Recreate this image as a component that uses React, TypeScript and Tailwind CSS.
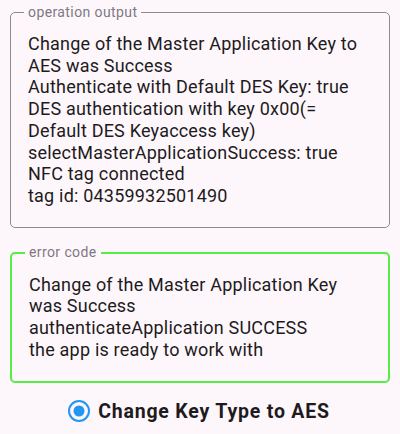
import React from 'react';

const outputLines = [
  'Change of the Master Application Key to',
  'AES was Success',
  'Authenticate with Default DES Key: true',
  'DES authentication with key 0x00(=',
  'Default DES Keyaccess key)',
  'selectMasterApplicationSuccess: true',
  'NFC tag connected',
  'tag id: 04359932501490',
];

const errorLines = [
  'Change of the Master Application Key',
  'was Success',
  'authenticateApplication SUCCESS',
  'the app is ready to work with',
];

interface OutlinedBoxProps {
  label: string;
  lines: string[];
  borderClass: string;
  className?: string;
}

const OutlinedBox: React.FC<OutlinedBoxProps> = ({ label, lines, borderClass, className = '' }) => (
  <fieldset className={`mx-[10px] rounded-[5px] border ${borderClass} pl-[17px] pr-3 pt-[13.5px] ${className}`}>
    <legend className="-ml-[4px] px-1 text-[14px] leading-[15px] tracking-[0.4px] text-[#7d7982]">{label}</legend>
    <div className="text-[18px] leading-[21.7px] tracking-[0.2px] text-[#1d1b20]">
      {lines.map((line, i) => (
        <div key={i} className="whitespace-nowrap">{line}</div>
      ))}
    </div>
  </fieldset>
);

export default function App() {
  return (
    <div
      className="w-[400px] h-[434px] overflow-hidden bg-[#fdf7fc] pt-[4.5px]"
      style={{ fontFamily: 'Roboto, "Noto Sans", sans-serif' }}
    >
      <OutlinedBox label="operation output" lines={outputLines} borderClass="border-[#8f8b93]" className="pb-[20px]" />
      <OutlinedBox
        label="error code"
        lines={errorLines}
        borderClass="border-[#55ee44] border-2"
        className="mt-[17.5px] pb-[21px]"
      />
      <div className="mt-[16px] flex h-6 items-center justify-center gap-[8px] pr-[2px]">
        <svg width="22" height="22" viewBox="0 0 22 22">
          <circle cx="11" cy="11" r="10" fill="none" stroke="#2196f3" strokeWidth="2" />
          <circle cx="11" cy="11" r="5.5" fill="#2196f3" />
        </svg>
        <span className="text-[19.5px] font-bold tracking-[0.8px] text-[#1d1b20]">Change Key Type to AES</span>
      </div>
    </div>
  );
}
